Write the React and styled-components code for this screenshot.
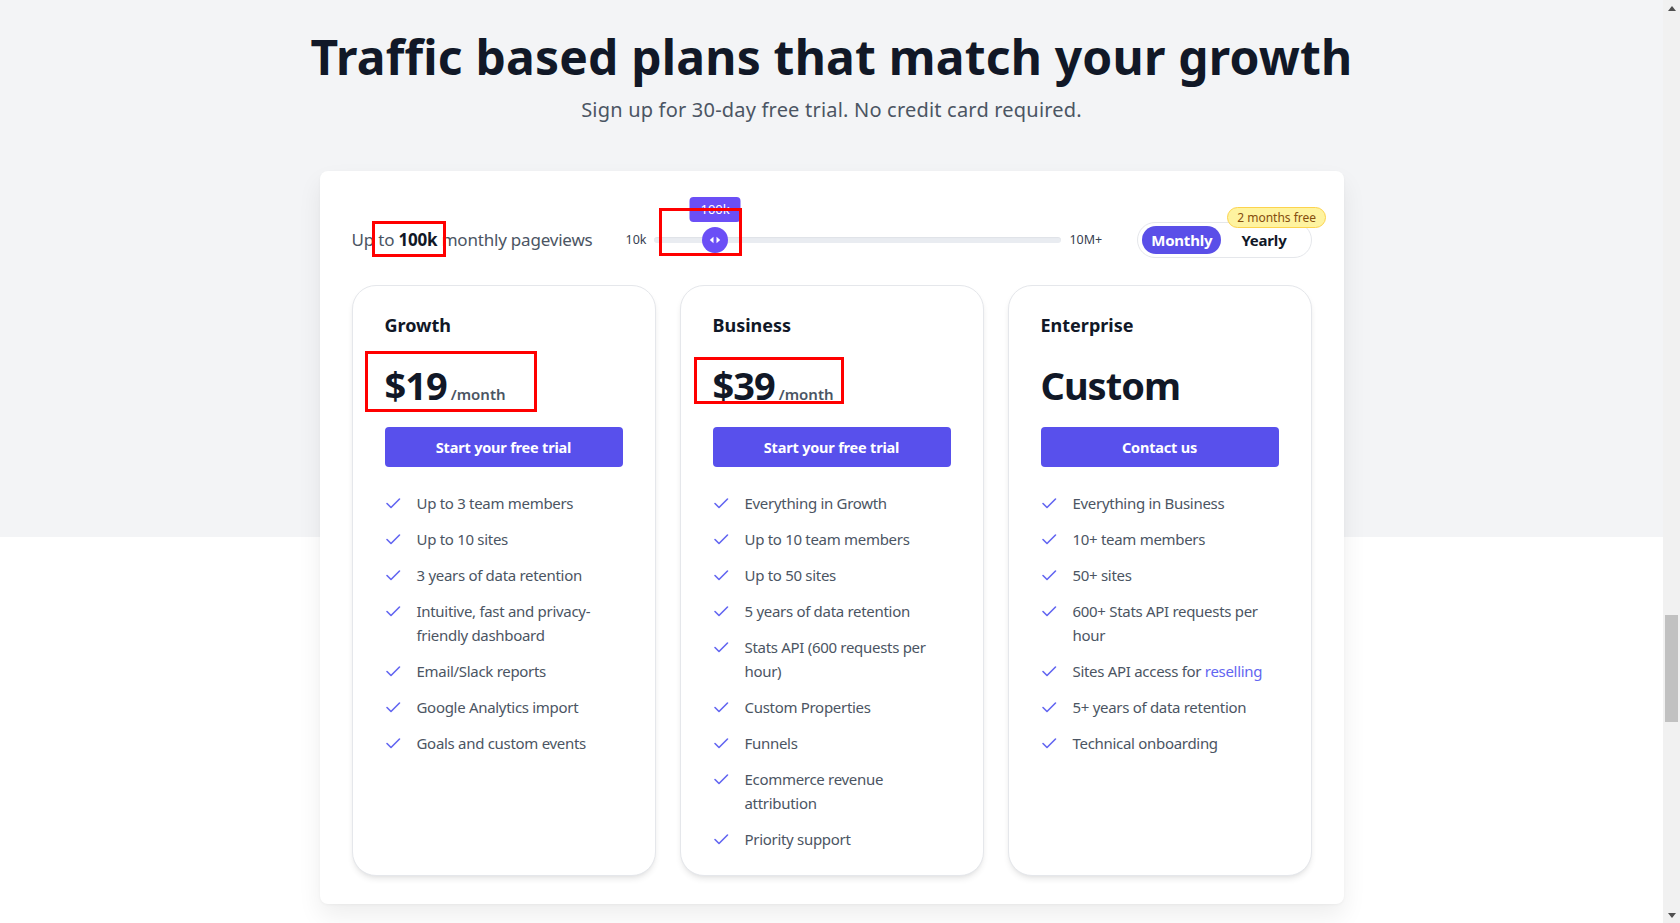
import React from 'react';
import styled, { createGlobalStyle } from 'styled-components';

const GlobalStyle = createGlobalStyle`
  body {
    margin: 0;
    font-family: "Noto Sans", "Open Sans", sans-serif;
    color: #111827;
    background: #ffffff;
  }
  * {
    box-sizing: border-box;
  }
`;

const Layout = styled.div`
  display: flex;
  min-height: 100vh;
`;

const Page = styled.main`
  flex: 1;
  min-width: 0;
  padding: 28px 0 20px;
  background: linear-gradient(to bottom, #f3f4f6 0, #f3f4f6 537px, #ffffff 537px);
`;

const Rail = styled.div`
  flex: none;
  width: 17px;
  display: flex;
  flex-direction: column;
  align-items: center;
  background: #f1f1f1;
`;

const RailArrow = styled.div`
  flex: none;
  width: 17px;
  height: 17px;
  display: flex;
  align-items: center;
  justify-content: center;
`;

const RailTrack = styled.div`
  flex: 1;
  width: 100%;
  display: flex;
  justify-content: center;
`;

const RailThumb = styled.div`
  width: 13px;
  height: 107px;
  margin-top: 598px;
  background: #c1c1c1;
`;

const Heading = styled.h1`
  margin: 0;
  text-align: center;
  font-size: 48px;
  line-height: 1.2;
  font-weight: 700;
  letter-spacing: 0.2px;
  color: #111827;
`;

const Subtitle = styled.p`
  margin: 10px 0 0;
  text-align: center;
  font-size: 20px;
  line-height: 28px;
  letter-spacing: 0.2px;
  color: #4b5563;
`;

const Panel = styled.div`
  width: 1024px;
  margin: 47px auto 0;
  padding: 32px 32px 28px;
  background: #ffffff;
  border-radius: 8px;
  box-shadow: 0 12px 24px rgba(0, 0, 0, 0.07), 0 1px 3px rgba(0, 0, 0, 0.04);
`;

const Controls = styled.div`
  display: flex;
  align-items: center;
  height: 74px;
  margin-bottom: 8px;
`;

const Pageviews = styled.p`
  margin: 0;
  font-size: 17px;
  line-height: 28px;
  letter-spacing: -0.2px;
  color: #4b5563;
  white-space: nowrap;
`;

const Strong = styled.span`
  position: relative;
  font-weight: 700;
  color: #111827;
`;

const Highlight = styled.span`
  position: absolute;
  left: ${p => p.$left}px;
  top: ${p => p.$top}px;
  width: ${p => p.$w}px;
  height: ${p => p.$h}px;
  border: 3px solid #ff0000;
  pointer-events: none;
  z-index: 5;
`;

const SliderGroup = styled.div`
  flex: 1;
  display: flex;
  align-items: center;
  gap: 8px;
  margin: 0 35px 0 33px;
`;

const SliderLabel = styled.span`
  font-size: 12.5px;
  color: #374151;
  white-space: nowrap;
`;

const Track = styled.div`
  position: relative;
  flex: 1;
  height: 6px;
  border-radius: 3px;
  background: #e9ecf1;
  box-shadow: inset 0 1px 1px rgba(0, 0, 0, 0.04);
`;

const Thumb = styled.div`
  position: absolute;
  top: 50%;
  width: 26px;
  height: 26px;
  margin: -13px 0 0 -13px;
  border-radius: 50%;
  background: #6b4ff6;
  display: flex;
  align-items: center;
  justify-content: center;
`;

const Tooltip = styled.div`
  position: absolute;
  bottom: calc(100% + 5px);
  left: 50%;
  transform: translateX(-50%);
  width: 51px;
  height: 25px;
  border-radius: 4px;
  background: #6b4ff6;
  color: #ffffff;
  font-size: 13px;
  line-height: 25px;
  text-align: center;
`;

const Toggle = styled.div`
  position: relative;
  display: flex;
  align-items: center;
  height: 36px;
  padding: 0 4px;
  border: 1px solid #e5e7eb;
  border-radius: 999px;
`;

const ToggleButton = styled.button`
  height: 28px;
  padding: 0 ${p => (p.$active ? 9 : 20)}px;
  border: none;
  border-radius: 999px;
  background: ${p => (p.$active ? '#5a4fe8' : 'transparent')};
  color: ${p => (p.$active ? '#ffffff' : '#111827')};
  font-family: inherit;
  font-size: 15px;
  font-weight: 700;
  letter-spacing: -0.2px;
  cursor: pointer;
`;

const Badge = styled.span`
  position: absolute;
  left: 89px;
  top: -16px;
  height: 21px;
  padding: 0 9px;
  border: 1px solid #fcd34d;
  border-radius: 999px;
  background: #fef3a0;
  color: #854d0e;
  font-size: 12px;
  line-height: 19px;
  white-space: nowrap;
`;

const Cards = styled.div`
  display: grid;
  grid-template-columns: repeat(3, 1fr);
  gap: 24px;
`;

const Card = styled.div`
  padding: 25px 32px 24px;
  border: 1px solid #e5e7eb;
  border-radius: 24px;
  background: #ffffff;
  box-shadow: 0 4px 6px -1px rgba(0, 0, 0, 0.09), 0 2px 4px -2px rgba(0, 0, 0, 0.06);
`;

const PlanName = styled.h3`
  margin: 0;
  font-size: 18px;
  line-height: 28px;
  font-weight: 700;
  color: #111827;
`;

const Price = styled.div`
  position: relative;
  display: flex;
  align-items: baseline;
  gap: 4px;
  margin-top: 26px;
  height: 40px;
`;

const Amount = styled.span`
  font-size: 38px;
  line-height: 40px;
  font-weight: 700;
  letter-spacing: -1px;
  color: #111827;
`;

const Period = styled.span`
  font-size: 15px;
  font-weight: 600;
  color: #4b5563;
`;

const Cta = styled.button`
  display: block;
  width: 100%;
  height: 40px;
  margin-top: 22px;
  border: none;
  border-radius: 4px;
  background: #5850ec;
  color: #ffffff;
  font-family: inherit;
  font-size: 14.5px;
  font-weight: 700;
  letter-spacing: -0.2px;
  cursor: pointer;
`;

const Features = styled.ul`
  list-style: none;
  margin: 24px 0 0;
  padding: 0;
  display: flex;
  flex-direction: column;
  gap: 12px;
`;

const Feature = styled.li`
  display: flex;
  align-items: flex-start;
  gap: 16px;
  font-size: 15px;
  line-height: 24px;
  letter-spacing: -0.3px;
  color: #4b5563;
`;

const CheckMark = styled.svg`
  flex: none;
  width: 16px;
  height: 24px;
`;

const Accent = styled.a`
  color: #6366f1;
  text-decoration: none;
`;

const Check = () => (
  <CheckMark viewBox="0 0 16 24" fill="none">
    <path d="M2 12.5 L6 16.5 L14.5 8" stroke="#6366f1" strokeWidth="1.6" strokeLinecap="round" strokeLinejoin="round" />
  </CheckMark>
);

const plans = [
  {
    name: 'Growth',
    amount: '$19',
    period: '/month',
    cta: 'Start your free trial',
    box: { left: -20, top: -14, w: 172, h: 61 },
    features: [
      'Up to 3 team members',
      'Up to 10 sites',
      '3 years of data retention',
      'Intuitive, fast and privacy-friendly dashboard',
      'Email/Slack reports',
      'Google Analytics import',
      'Goals and custom events',
    ],
  },
  {
    name: 'Business',
    amount: '$39',
    period: '/month',
    cta: 'Start your free trial',
    box: { left: -19, top: -8, w: 150, h: 47 },
    features: [
      'Everything in Growth',
      'Up to 10 team members',
      'Up to 50 sites',
      '5 years of data retention',
      'Stats API (600 requests per hour)',
      'Custom Properties',
      'Funnels',
      'Ecommerce revenue attribution',
      'Priority support',
    ],
  },
  {
    name: 'Enterprise',
    amount: 'Custom',
    cta: 'Contact us',
    features: [
      'Everything in Business',
      '10+ team members',
      '50+ sites',
      '600+ Stats API requests per hour',
      <>Sites API access for <Accent href="#">reselling</Accent></>,
      '5+ years of data retention',
      'Technical onboarding',
    ],
  },
];

export default function App() {
  return (
    <>
      <GlobalStyle />
      <Layout>
        <Page>
          <Heading>Traffic based plans that match your growth</Heading>
          <Subtitle>Sign up for 30-day free trial. No credit card required.</Subtitle>

          <Panel>
            <Controls>
              <Pageviews>
                Up to{' '}
                <Strong>
                  100k
                  <Highlight $left={-26} $top={-7} $w={74} $h={36} />
                </Strong>{' '}
                monthly pageviews
              </Pageviews>

              <SliderGroup>
                <SliderLabel>10k</SliderLabel>
                <Track>
                  <Thumb style={{ left: '14.9%' }}>
                    <Tooltip>100k</Tooltip>
                    <svg width="12" height="8" viewBox="0 0 12 8">
                      <path d="M4.5 0.8 L0.8 4 L4.5 7.2 Z" fill="#ffffff" />
                      <path d="M7.5 0.8 L11.2 4 L7.5 7.2 Z" fill="#ffffff" />
                    </svg>
                    <Highlight $left={-43} $top={-19} $w={83} $h={48} />
                  </Thumb>
                </Track>
                <SliderLabel>10M+</SliderLabel>
              </SliderGroup>

              <Toggle>
                <ToggleButton $active>Monthly</ToggleButton>
                <ToggleButton>Yearly</ToggleButton>
                <Badge>2 months free</Badge>
              </Toggle>
            </Controls>

            <Cards>
              {plans.map(plan => (
                <Card key={plan.name}>
                  <PlanName>{plan.name}</PlanName>
                  <Price>
                    <Amount>{plan.amount}</Amount>
                    {plan.period && <Period>{plan.period}</Period>}
                    {plan.box && (
                      <Highlight $left={plan.box.left} $top={plan.box.top} $w={plan.box.w} $h={plan.box.h} />
                    )}
                  </Price>
                  <Cta>{plan.cta}</Cta>
                  <Features>
                    {plan.features.map((f, i) => (
                      <Feature key={i}>
                        <Check />
                        <span>{f}</span>
                      </Feature>
                    ))}
                  </Features>
                </Card>
              ))}
            </Cards>
          </Panel>
        </Page>

        <Rail>
          <RailArrow>
            <svg width="8" height="5" viewBox="0 0 8 5">
              <path d="M0 5 L4 0 L8 5 Z" fill="#505050" />
            </svg>
          </RailArrow>
          <RailTrack>
            <RailThumb />
          </RailTrack>
          <RailArrow>
            <svg width="8" height="5" viewBox="0 0 8 5">
              <path d="M0 0 L4 5 L8 0 Z" fill="#505050" />
            </svg>
          </RailArrow>
        </Rail>
      </Layout>
    </>
  );
}
